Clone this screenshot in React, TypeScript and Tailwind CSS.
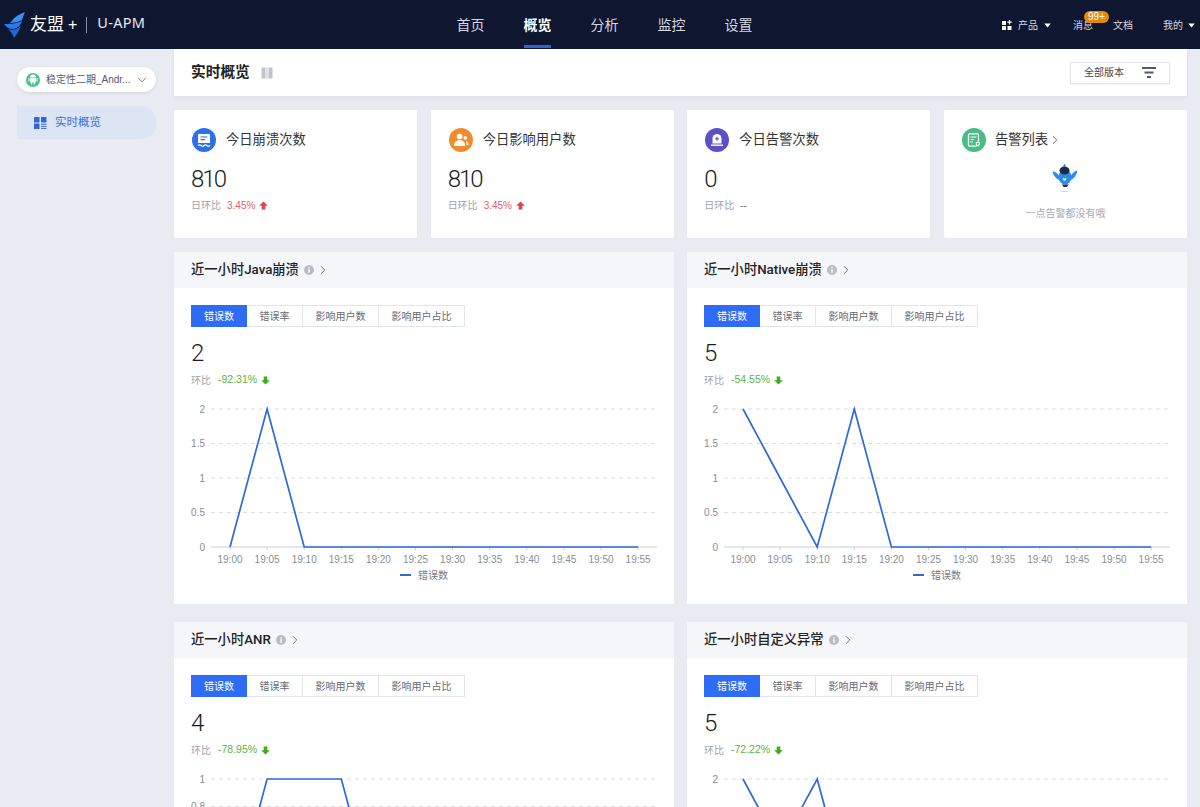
import React from "react";
import { ChevronRight, ChevronDown } from "lucide-react";

const ticks = ["19:00","19:05","19:10","19:15","19:20","19:25","19:30","19:35","19:40","19:45","19:50","19:55"];

function Caret() {
  return (
    <svg width="7" height="5" viewBox="0 0 7 5" className="shrink-0">
      <path d="M0.3 0.6h6.4L3.5 4.4z" fill="#ffffff" />
    </svg>
  );
}

function Arrow({ up, color }: { up: boolean; color: string }) {
  return (
    <svg width="9" height="9" viewBox="0 0 8 8" className="shrink-0">
      <path d={up ? "M4 0.4L7.8 4.2H5.6V7.6H2.4V4.2H0.2z" : "M4 7.6L7.8 3.8H5.6V0.4H2.4V3.8H0.2z"} fill={color} />
    </svg>
  );
}

function Logo() {
  return (
    <svg width="22" height="27" viewBox="0 0 22 27" className="shrink-0">
      <path d="M21 1C16 3 10 6 8 10L6 12C10 12 15 11 18 9 19 6 20 3 21 1z" fill="#3d8ef0" />
      <path d="M0 13C5 13 12 13 18 10 17 14 14 17 9 18 5 18 2 16 0 13z" fill="#2b7ae6" />
      <path d="M4 18C8 20 13 18 17 15 15 20 13 23 10 27 9 23 6 20 4 18z" fill="#1f66d0" />
    </svg>
  );
}

function AndroidIcon() {
  return (
    <svg width="10" height="11" viewBox="0 0 10 11">
      <path d="M2 3.600a3 3 0 0 1 6 0z" fill="#fff" />
      <rect x="2" y="4.100" width="6" height="4.400" rx="0.500" fill="#fff" />
      <rect x="0.400" y="4.100" width="1.100" height="3.300" rx="0.550" fill="#fff" />
      <rect x="8.500" y="4.100" width="1.100" height="3.300" rx="0.550" fill="#fff" />
      <rect x="3" y="8" width="1.200" height="2.600" rx="0.600" fill="#fff" />
      <rect x="5.800" y="8" width="1.200" height="2.600" rx="0.600" fill="#fff" />
    </svg>
  );
}

function CrashIcon() {
  return (
    <svg width="14" height="14" viewBox="0 0 14 14">
      <path d="M2 1h10a1 1 0 0 1 1 1v8H1V2a1 1 0 0 1 1-1z" fill="#fff" />
      <path d="M3.500 4h7M3.500 6.600h4.500" stroke="#2f6fe8" strokeWidth="1.200" />
      <path d="M1 12.500c1-.9 2-.9 3 0s2 .9 3 0 2-.9 3 0 2 .9 3 0" stroke="#fff" strokeWidth="1.100" fill="none" />
    </svg>
  );
}

function UsersIcon() {
  return (
    <svg width="16" height="14" viewBox="0 0 16 14">
      <circle cx="6.600" cy="3.600" r="2.800" fill="#fff" />
      <path d="M1 12.200c0-3 2.400-5 5.600-5s5.600 2 5.600 5c0 .5-.4.8-.8.8H1.800c-.4 0-.8-.3-.8-.8z" fill="#fff" />
      <circle cx="12.300" cy="4.800" r="1.900" fill="#fff" />
      <path d="M13 8c1.500.4 2.600 1.700 2.600 3.400 0 .4-.3.7-.6.7h-1.400C13.500 10.600 13.500 9.300 13 8z" fill="#fff" />
    </svg>
  );
}

function AlertIcon() {
  return (
    <svg width="14" height="14" viewBox="0 0 14 14">
      <path d="M2.500 10.500V5.500a4.500 4.500 0 0 1 9 0v5z" fill="#fff" />
      <path d="M7 3.700v4M5 5.700h4" stroke="#5d50c6" strokeWidth="1.100" />
      <rect x="1" y="11.500" width="12" height="1.400" fill="#fff" />
    </svg>
  );
}

function ListIcon() {
  return (
    <svg width="14" height="14" viewBox="0 0 14 14">
      <rect x="1.500" y="0.800" width="10" height="12.400" rx="1" fill="none" stroke="#fff" strokeWidth="1.300" />
      <path d="M3.500 4h6M3.500 6.500h3.500M3.500 9h2.500" stroke="#fff" strokeWidth="1.100" />
      <circle cx="10.800" cy="10.800" r="2.800" fill="#45bd85" />
      <circle cx="10.800" cy="10.800" r="1.700" fill="none" stroke="#fff" strokeWidth="1.100" />
    </svg>
  );
}

function Bird() {
  return (
    <svg width="26" height="30" viewBox="0 0 26 30">
      <path d="M12.500 0.500l1.500 3h-3z" fill="#2d7fe8" />
      <path d="M0.500 8.500C3 8.500 5 10 7 12.500L8 17C4.500 16.500 1.500 13 0.500 8.500z" fill="#2a8cf0" />
      <path d="M25.500 7.500C23 8 21 9.500 19 12.500L18 17C21.500 16.500 24.500 12.500 25.500 7.500z" fill="#2a8cf0" />
      <ellipse cx="13" cy="14" rx="6.500" ry="7.500" fill="#2a8cf0" />
      <ellipse cx="12.500" cy="7.500" rx="5" ry="4" fill="#1d2b4d" />
      <path d="M10.500 15.500c1-1 1.500-.5 2 .2.500-.7 1-1.200 2-.2-.5 1.500-1.500 2.300-2 2.500-.5-.2-1.500-1-2-2.500z" fill="#dff0ff" />
      <path d="M10 21.500h7l-2.500 2.500h-3z" fill="#1d2b4d" />
      <rect x="9.500" y="28" width="7" height="1" rx="0.500" fill="#d5d7dc" />
    </svg>
  );
}

function Chart({ data, max, yTicks }: { data: number[]; max: number; yTicks: string[] }) {
  const ox = 56;
  const dx = 37.1;
  const top = 14;
  const h = 138;
  const y = (v: number) => top + h * (1 - v / max);
  const pts = data.map((v, i) => `${ox + i * dx},${y(v)}`).join(" ");
  return (
    <svg width="500" height="175" viewBox="0 0 500 175" className="block">
      {yTicks.map((t, i) => {
        const gy = top + (h * i) / (yTicks.length - 1);
        const last = i === yTicks.length - 1;
        return (
          <g key={t}>
            <line x1="37" x2="483" y1={gy} y2={gy} stroke={last ? "#c9ccd3" : "#d9dbe0"} strokeWidth="1" strokeDasharray={last ? undefined : "4 4"} />
            <text x="31" y={gy + 3.5} textAnchor="end" fontSize="10" fill="#8a8d94">{t}</text>
          </g>
        );
      })}
      {ticks.map((t, i) => (
        <g key={t}>
          <line x1={ox + i * dx} x2={ox + i * dx} y1="152" y2="155" stroke="#c9ccd3" />
          <text x={ox + i * dx} y="168" textAnchor="middle" fontSize="10" fill="#8a8d94">{t}</text>
        </g>
      ))}
      <polyline points={pts} fill="none" stroke="#2f68d8" strokeWidth="1.700" strokeLinejoin="miter" />
    </svg>
  );
}

function Panel({ title, value, ratio, data, max, yTicks }: { title: string; value: string; ratio: string; data: number[]; max: number; yTicks: string[] }) {
  return (
    <section className="h-[352px] bg-white">
      <div className="flex h-9 items-center bg-[#f5f6fa] px-[17px]">
        <span className="font-['Roboto','Noto_Sans_CJK_SC',sans-serif] text-[13.300px] font-medium text-[#222222]">{title}</span>
        <svg width="10" height="10" viewBox="0 0 10 10" className="ml-[5px] shrink-0">
          <circle cx="5" cy="5" r="5" fill="#b9bcc4" />
          <rect x="4.300" y="4.200" width="1.400" height="3.600" fill="#fff" />
          <rect x="4.300" y="2.200" width="1.400" height="1.300" fill="#fff" />
        </svg>
        <ChevronRight size={14} strokeWidth={1.300} className="ml-[2px] text-[#444852]" />
      </div>
      <div className="mt-[17px] ml-[17px] flex h-[22px] w-[274px] border border-[#e3e5ea] text-[10px] text-[#666a73]">
        <div className="-my-px -ml-px flex w-[56px] items-center justify-center bg-[#2e6cf6] text-white">错误数</div>
        <div className="flex w-[56px] items-center justify-center border-r border-[#e3e5ea]">错误率</div>
        <div className="flex w-[76px] items-center justify-center border-r border-[#e3e5ea]">影响用户数</div>
        <div className="flex flex-1 items-center justify-center">影响用户占比</div>
      </div>
      <div className="mt-[11px] ml-[17px] h-[30px] font-['Roboto',sans-serif] text-[24px] leading-[30px] font-light text-[#1c1c1c]">{value}</div>
      <div className="mt-[4px] ml-[17px] flex h-4 items-center text-[10px] text-[#a0a3aa]">
        <span>环比</span>
        <span className="ml-[7px] text-[10.500px] text-[#5cb543]">{ratio}</span>
        <span className="ml-1"><Arrow up={false} color="#3fae1a" /></span>
      </div>
      <div className="mt-[7px]">
        <Chart data={data} max={max} yTicks={yTicks} />
      </div>
      <div className="-mt-px flex h-[12px] items-center justify-center gap-[7px] text-[10px] text-[#777a82]">
        <span className="h-[2px] w-[11px] bg-[#2f68d8]" />
        <span>错误数</span>
      </div>
    </section>
  );
}

function StatCard({ circle, icon, title, value, ratio, up }: { circle: string; icon: React.ReactNode; title: string; value: string; ratio: string; up?: boolean }) {
  return (
    <div className="h-[128px] rounded-[2px] bg-white px-[17px] pt-[18px]">
      <div className="ml-px flex items-center">
        <div className={`flex h-6 w-6 items-center justify-center rounded-full ${circle}`}>{icon}</div>
        <span className="ml-[10px] text-[13.300px] text-[#333333]">{title}</span>
      </div>
      <div className="mt-[12px] h-[30px] font-['Roboto',sans-serif] text-[24px] leading-[30px] font-light tracking-[-2px] text-[#1c1c1c]">{value}</div>
      <div className="mt-[3px] flex h-4 items-center text-[10px] text-[#a0a3aa]">
        <span>日环比</span>
        {up ? (
          <>
            <span className="ml-[6px] text-[10px] text-[#e2606a]">{ratio}</span>
            <span className="ml-1"><Arrow up color="#e2404a" /></span>
          </>
        ) : (
          <span className="ml-[6px] text-[#666a73]">{ratio}</span>
        )}
      </div>
    </div>
  );
}

export default function App() {
  const t5 = ["2", "1.5", "1", "0.5", "0"];
  return (
    <div className="h-[807px] w-[1200px] overflow-hidden bg-[#e9ebf2] font-['Liberation_Sans','Noto_Sans_CJK_SC',sans-serif]">
      <header className="flex h-[49px] items-center bg-[#0e1630] text-white">
        <div className="flex w-[437px] items-center pl-[4px]">
          <Logo />
          <span className="ml-[4px] text-[17px]">友盟</span>
          <span className="ml-[4px] text-[16px]">+</span>
          <span className="ml-[9px] h-[16px] w-px bg-[#8a90a3]" />
          <span className="mb-[3px] ml-[10px] font-['Noto_Sans',sans-serif] text-[14.500px] tracking-[0.3px] text-[#e6e8ee]">U-APM</span>
        </div>
        <nav className="flex h-full w-[335px] pt-px text-[14px] text-[#d5d8e0]">
          {["首页", "概览", "分析", "监控", "设置"].map((n) => (
            <div key={n} className="relative flex w-[67px] items-center justify-center">
              <span className={n === "概览" ? "font-bold text-white" : ""}>{n}</span>
              {n === "概览" && <span className="absolute bottom-[1px] left-[20px] h-[3px] w-[27px] bg-[#2e62d9]" />}
            </div>
          ))}
        </nav>
        <div className="ml-[230px] flex items-center pt-px text-[10px] text-[#d5d8e0]">
          <svg width="10" height="10" viewBox="0 0 10 10" className="shrink-0">
            <rect x="0" y="1" width="4" height="4" fill="#fff" />
            <rect x="0" y="6" width="4" height="4" fill="#fff" />
            <rect x="5.500" y="6" width="4" height="4" fill="#fff" />
            <path d="M7.500 0v4.500M5.300 2.200h4.400" stroke="#fff" strokeWidth="1.300" />
          </svg>
          <span className="ml-[6px]">产品</span>
          <span className="ml-[6px]"><Caret /></span>
          <span className="relative ml-[22px]">
            消息
            <span className="absolute -top-[7px] left-[11px] flex h-[12px] w-[25px] items-center justify-center rounded-full bg-[#e8890f] text-[10px] leading-none text-white">99+</span>
          </span>
          <span className="ml-[20px]">文档</span>
          <span className="ml-[30px]">我的</span>
          <span className="ml-[5px]"><Caret /></span>
        </div>
      </header>
      <div className="flex h-[758px]">
        <aside className="w-[173px] shrink-0 pt-[18px] pl-[17px]">
          <div className="flex h-[25px] w-[139px] items-center rounded-full bg-white pl-[9px] shadow-[0_1px_3px_rgba(30,40,80,0.12)]">
            <span className="flex h-[14px] w-[14px] items-center justify-center rounded-full bg-[#48c28b]">
              <AndroidIcon />
            </span>
            <span className="ml-[6px] whitespace-nowrap text-[10px] text-[#555a66]">稳定性二期_Andr...</span>
            <ChevronDown size={14} strokeWidth={1.300} className="ml-[5px] text-[#444852]" />
          </div>
          <div className="mt-[14px] flex h-[33px] w-[140px] items-center rounded-l-[4px] rounded-r-full bg-[#dde5f5] pl-[17px]">
            <svg width="13" height="12" viewBox="0 0 13 12" className="shrink-0">
              <rect x="0" y="0" width="5.500" height="5.500" fill="#3367d6" />
              <rect x="0" y="6.500" width="5.500" height="5.500" fill="#3367d6" />
              <rect x="7" y="0" width="5.500" height="5.500" fill="#3367d6" />
              <path d="M7 7.200h5.500M7 9.300h5.500M7 11.400h5.500" stroke="#3367d6" strokeWidth="1" />
            </svg>
            <span className="ml-[8px] pt-px text-[11.500px] text-[#3a6fd8]">实时概览</span>
          </div>
        </aside>
        <main className="ml-px w-[1013px] shrink-0">
          <div className="flex h-[47px] items-center bg-white pr-[17px] pl-[17px] shadow-[0_2px_4px_rgba(30,40,80,0.06)]">
            <span className="text-[14.700px] font-bold text-[#222222]">实时概览</span>
            <svg width="12" height="12" viewBox="0 0 12 12" className="ml-[11px] shrink-0">
              <path d="M0.500 0.500h4v11h-4zM5.500 0.500h1v11h-1zM7.500 0.500h4v11h-4z" fill="#c0c3ca" />
            </svg>
            <div className="ml-auto flex h-[22px] w-[100px] items-center border border-[#e3e5ea] pl-[13px] text-[10px] text-[#444852] shadow-[0_1px_2px_rgba(30,40,80,0.05)]">
              <span>全部版本</span>
              <svg width="14" height="11" viewBox="0 0 14 11" className="ml-[18px] shrink-0">
                <path d="M0 1h14M2.500 5.500h9M5 10h4" stroke="#555a66" strokeWidth="1.800" />
              </svg>
            </div>
          </div>
          <div className="mt-[14px] grid grid-cols-4 gap-[13.500px]">
            <StatCard circle="bg-[#2f6fe8]" icon={<CrashIcon />} title="今日崩溃次数" value="810" ratio="3.45%" up />
            <StatCard circle="bg-[#f08c2a]" icon={<UsersIcon />} title="今日影响用户数" value="810" ratio="3.45%" up />
            <StatCard circle="bg-[#5d50c6]" icon={<AlertIcon />} title="今日告警次数" value="0" ratio="--" />
            <div className="h-[128px] rounded-[2px] bg-white px-[18px] pt-[18px]">
              <div className="flex items-center">
                <div className="flex h-6 w-6 items-center justify-center rounded-full bg-[#45bd85]"><ListIcon /></div>
                <span className="ml-[9px] text-[13.300px] text-[#333333]">告警列表</span>
                <ChevronRight size={14} strokeWidth={1.300} className="text-[#444852]" />
              </div>
              <div className="mt-[11px] flex flex-col items-center">
                <Bird />
                <span className="mt-[13px] text-[10px] text-[#a8abb2]">一点告警都没有哦</span>
              </div>
            </div>
          </div>
          <div className="mt-[14px] grid grid-cols-2 gap-x-[13px] gap-y-[18px]">
            <Panel title="近一小时Java崩溃" value="2" ratio="-92.31%" data={[0,2,0,0,0,0,0,0,0,0,0,0]} max={2} yTicks={t5} />
            <Panel title="近一小时Native崩溃" value="5" ratio="-54.55%" data={[2,1,0,2,0,0,0,0,0,0,0,0]} max={2} yTicks={t5} />
            <Panel title="近一小时ANR" value="4" ratio="-78.95%" data={[0,1,1,1,0,0,0,0,0,0,0,0]} max={1} yTicks={["1","0.8","0.6","0.4","0.2","0"]} />
            <Panel title="近一小时自定义异常" value="5" ratio="-72.22%" data={[2,1,2,0,0,0,0,0,0,0,0,0]} max={2} yTicks={t5} />
          </div>
        </main>
      </div>
    </div>
  );
}
